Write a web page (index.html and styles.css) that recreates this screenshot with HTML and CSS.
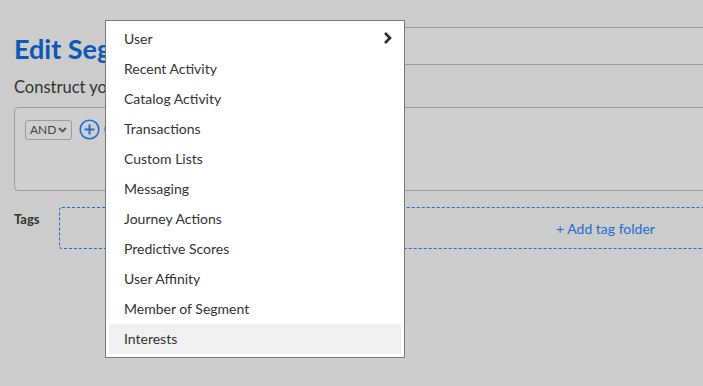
FILE: index.html
```html
<!DOCTYPE html>
<html>
<head>
<meta charset="utf-8">
<link rel="stylesheet" href="styles.css">
</head>
<body>
<div class="page">
  <div class="header">
    <h1 class="title">Edit Segment</h1>
    <div class="name-input"></div>
  </div>
  <p class="subtitle">Construct your segment by adding conditions below.</p>
  <div class="builder">
    <div class="builder-row">
      <div class="and-select">AND
        <svg class="caret" width="9" height="6" viewBox="0 0 9 6"><path d="M1 1 L4.5 4.5 L8 1" fill="none" stroke="#555" stroke-width="1.8"/></svg>
      </div>
      <svg class="circle-btn" width="21" height="21" viewBox="0 0 21 21"><circle cx="10.5" cy="10.5" r="9.3" fill="none" stroke="#1f6fd1" stroke-width="1.6"/><path d="M10.5 5.5 V15.5 M5.5 10.5 H15.5" stroke="#1f6fd1" stroke-width="2"/></svg>
      <svg class="circle-btn" width="21" height="21" viewBox="0 0 21 21"><circle cx="10.5" cy="10.5" r="9.3" fill="none" stroke="#1f6fd1" stroke-width="1.6"/><path d="M10.5 5.5 V15.5 M5.5 10.5 H15.5" stroke="#1f6fd1" stroke-width="2"/></svg>
    </div>
  </div>
  <div class="tags-row">
    <div class="tags-label">Tags</div>
    <div class="tags-box"><span class="add-tag">+ Add tag folder</span></div>
  </div>
</div>

<div class="menu">
  <div class="menu-item">User
    <svg class="chev" width="10" height="14" viewBox="0 0 10 14"><path d="M2 2 L7 7 L2 12" fill="none" stroke="#2b2b2b" stroke-width="2.6"/></svg>
  </div>
  <div class="menu-item">Recent Activity</div>
  <div class="menu-item">Catalog Activity</div>
  <div class="menu-item">Transactions</div>
  <div class="menu-item">Custom Lists</div>
  <div class="menu-item">Messaging</div>
  <div class="menu-item">Journey Actions</div>
  <div class="menu-item">Predictive Scores</div>
  <div class="menu-item">User Affinity</div>
  <div class="menu-item">Member of Segment</div>
  <div class="menu-item active">Interests</div>
</div>
</body>
</html>
```
FILE: styles.css
```css
html, body {
  margin: 0;
  padding: 0;
}
body {
  background: #cbcccb;
  font-family: Lato, "Open Sans", sans-serif;
  color: #333;
  width: 703px;
  height: 386px;
  overflow: hidden;
  position: relative;
}
.page {
  padding: 27px 0 0 14px;
}
.header {
  display: flex;
  align-items: flex-start;
  gap: 20px;
  height: 38px;
}
.title {
  margin: 5px 0 0 0;
  font-size: 27px;
  font-weight: 700;
  color: #0b58b8;
  line-height: 34px;
  white-space: nowrap;
}
.name-input {
  flex: 1;
  height: 36px;
  border-top: 1px solid #9a9c9e;
  border-bottom: 1px solid #9a9c9e;
  background: #cfcfcf;
}
.subtitle {
  margin: 8px 0 0 0;
  font-size: 16.5px;
  line-height: 28px;
  color: #333;
  white-space: nowrap;
}
.builder {
  margin-top: 6px;
  height: 84px;
  border: 1px solid #9a9c9e;
  border-right: none;
  border-radius: 5px 0 0 5px;
  background: #cfcfcf;
  padding: 11px 0 0 10px;
  box-sizing: border-box;
}
.builder-row {
  display: flex;
  align-items: center;
  gap: 4px;
}
.and-select {
  display: flex;
  align-items: center;
  gap: 2px;
  height: 20px;
  width: 47px;
  box-sizing: border-box;
  border: 1px solid #9a9c9e;
  border-radius: 3px;
  padding-left: 4px;
  font-size: 12px;
  color: #444;
  margin-right: 3px;
}
.circle-btn {
  display: block;
}
.tags-row {
  display: flex;
  margin-top: 16px;
}
.tags-label {
  width: 45px;
  font-size: 13px;
  font-weight: 700;
  color: #333;
  padding-top: 4px;
}
.tags-box {
  flex: 1;
  height: 42px;
  box-sizing: border-box;
  border: 1px dashed #1f6fd1;
  border-right: none;
  border-radius: 3px 0 0 3px;
  display: flex;
  align-items: center;
  padding-left: 496px;
}
.add-tag {
  font-size: 14px;
  color: #1f6fd1;
  white-space: nowrap;
}
.menu {
  position: absolute;
  left: 105px;
  top: 20px;
  width: 300px;
  box-sizing: border-box;
  background: #fff;
  border: 1px solid #7b7b7b;
  padding: 3px;
}
.menu-item {
  height: 30px;
  box-sizing: border-box;
  display: flex;
  align-items: center;
  justify-content: space-between;
  padding: 0 8px 2px 15px;
  font-size: 14px;
  color: #333;
}
.menu-item.active {
  background: #f0f0f0;
}
.chev {
  display: block;
}
```
